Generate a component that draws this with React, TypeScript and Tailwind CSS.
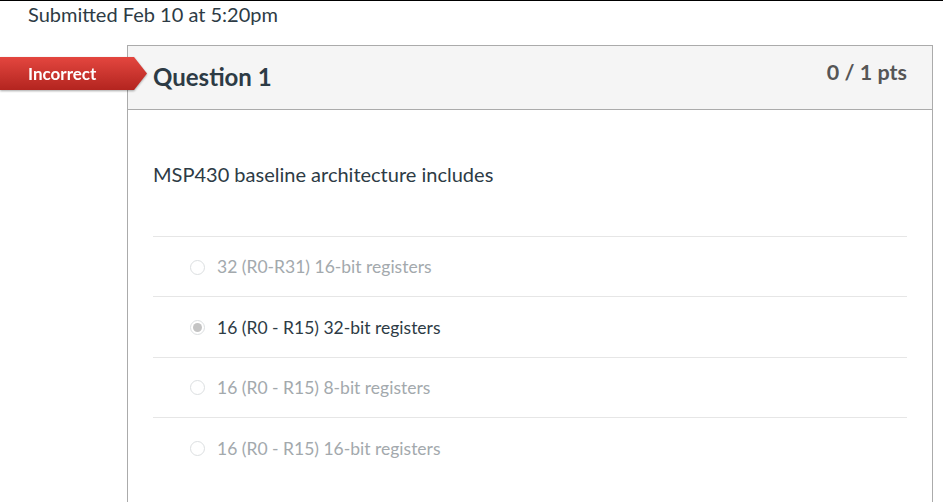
import React from 'react'

// Risposte della domanda (solo la seconda è selezionata)
const risposte = [
  { id: 'a', testo: '32 (R0-R31) 16-bit registers', selezionata: false },
  { id: 'b', testo: '16 (R0 - R15) 32-bit registers', selezionata: true },
  { id: 'c', testo: '16 (R0 - R15) 8-bit registers', selezionata: false },
  { id: 'd', testo: '16 (R0 - R15) 16-bit registers', selezionata: false },
]

function Radio({ checked }: { checked: boolean }) {
  return (
    <span className="w-[15px] h-[15px] rounded-full border border-[#dcdfe1] bg-white flex items-center justify-center shrink-0">
      {checked && <span className="w-[9px] h-[9px] rounded-full bg-[#c4c4c4]" />}
    </span>
  )
}

export default function App() {
  return (
    <div className="w-[943px] h-[502px] bg-white border-t border-black overflow-hidden font-['Lato','Noto_Sans',sans-serif] text-[#2d3b45]">
      {/* INTESTAZIONE: data di consegna */}
      <div className="pl-[28px] h-[29px] pt-[3px] text-[20px] leading-none">
        Submitted Feb 10 at 5:20pm
      </div>

      <div className="flex mt-[15px]">
        <div className="w-[127px] relative shrink-0">
          {/* ETICHETTA: Incorrect */}
          <div className="absolute left-0 top-[12px] w-[147px] h-[33px] z-10 drop-shadow-[0_1px_1px_rgba(0,0,0,0.35)]">
            <div className="w-full h-full bg-gradient-to-b from-[#e4463f] to-[#b3241f] [clip-path:polygon(0_0,134px_0,147px_50%,134px_100%,0_100%)] flex items-center">
              <span className="pl-[28px] text-white font-bold text-[17px] leading-none">Incorrect</span>
            </div>
          </div>
        </div>

        {/* CARD DELLA DOMANDA */}
        <div className="w-[806px] h-[460px] border border-b-0 border-[#ababab] shrink-0">
          <div className="h-[64px] bg-[#f5f5f5] border-b border-[#ababab] flex justify-between px-[25px]">
            <h3 className="pt-[19px] text-[24px] font-bold leading-none text-[#2d3b45]">Question 1</h3>
            <span className="pt-[16px] text-[21.5px] font-bold leading-none text-[#565656]">0 / 1 pts</span>
          </div>

          <div className="px-[25px]">
            <p className="pt-[52px] pb-[50px] text-[20px] leading-[24px]">MSP430 baseline architecture includes</p>

            <div>
              {risposte.map(r => (
                <div
                  key={r.id}
                  className="h-[60.4px] border-t border-[#e6e6e6] flex items-center gap-[12px] pl-[37px] pt-[1px]"
                >
                  <Radio checked={r.selezionata} />
                  <span className={`text-[17.5px] leading-none ${r.selezionata ? 'text-[#2d3b45]' : 'text-[#a3a9ad]'}`}>
                    {r.testo}
                  </span>
                </div>
              ))}
            </div>
          </div>
        </div>
      </div>
    </div>
  )
}
